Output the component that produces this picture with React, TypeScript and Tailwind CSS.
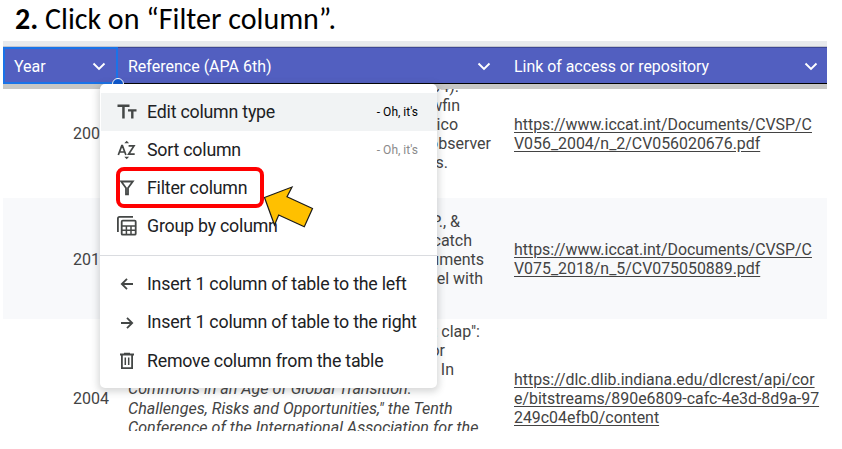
import type { ReactNode } from "react";

function Chevron() {
  return (
    <svg width="14" height="10" viewBox="0 0 14 10" fill="none" stroke="white" strokeWidth="1.9">
      <path d="M1.5 1.5 L7 7 L12.5 1.5" />
    </svg>
  );
}

function TypeIcon() {
  return (
    <svg width="20" height="18" viewBox="0 0 20 18" fill="#444746">
      <path d="M0.5 1.5h12v2.4H7.7V15.5H5.2V3.9H0.5z M11 6.2h8.5V8.5h-3v7h-2.4V8.5H11z" />
    </svg>
  );
}

function SortIcon() {
  return (
    <svg width="20" height="20" viewBox="0 0 20 20" fill="none" stroke="#444746" strokeWidth="1.7">
      <path d="M1.3 15 L4.8 5.7 H5.4 L8.9 15 M2.6 12 H7.6 M11.6 5.9 H17 L11.6 14.2 H17.7" />
      <path d="M7.3 3.2 L9.7 .8 L12.1 3.2z M7.3 16.8 L9.7 19.2 L12.1 16.8z" fill="#444746" stroke="none" />
    </svg>
  );
}

function FilterIcon() {
  return (
    <svg width="20" height="18" viewBox="0 0 20 18" fill="none" stroke="#444746" strokeWidth="1.8">
      <path d="M4.2 2.5H15.8L11 9V15.3H9V9z" />
    </svg>
  );
}

function GroupIcon() {
  return (
    <svg width="20" height="20" viewBox="0 0 20 20" fill="none" stroke="#444746" strokeWidth="1.8">
      <path d="M.9 16V2.5Q.9 .9 2.5 .9H16" />
      <rect x="4.7" y="4.7" width="14" height="14" rx="1" />
      <path d="M4.7 10H18.7M4.7 14.3H18.7M9.4 10V18.7M14 10V18.7" strokeWidth="1.5" />
    </svg>
  );
}

function ArrowIcon({ right = false }: { right?: boolean }) {
  return (
    <svg width="20" height="16" viewBox="0 0 20 16" fill="none" stroke="#444746" strokeWidth="1.8">
      {right ? <path d="M4 8H15M10 2.8L15.2 8L10 13.2" /> : <path d="M16 8H5M10 2.8L4.8 8L10 13.2" />}
    </svg>
  );
}

function TrashIcon() {
  return (
    <svg width="20" height="20" viewBox="0 0 20 20" fill="none" stroke="#444746" strokeWidth="1.8">
      <path d="M3 3.5H17M7 2.6H13M4.9 3.5V17.2H15.1V3.5" />
      <path d="M8.3 6.5V14M11.7 6.5V14" strokeWidth="1.5" />
    </svg>
  );
}

function MenuItem({ icon, label, hint, active = false }: { icon: ReactNode; label: string; hint?: string; active?: boolean }) {
  return (
    <div className={`ml-px flex h-[38.2px] items-center pl-4 pr-[19px] ${active ? "bg-[#f1f3f4]" : ""}`}>
      <span className="flex w-5 shrink-0 justify-center pb-px">{icon}</span>
      <span className="ml-[10px] whitespace-nowrap pb-[0.5px] text-[17.8px] tracking-[-0.22px] text-[#202124]">{label}</span>
      {hint && <span className={`ml-auto whitespace-nowrap pb-px text-[12px] ${active ? "text-black" : "text-[#8a8a8a]"}`}>{hint}</span>}
    </div>
  );
}

function Row({ year, lines, link, className }: { year: string; lines: ReactNode; link: string[]; className: string }) {
  return (
    <div className={`flex shrink-0 items-center leading-[19.1px] ${className}`}>
      <div className="w-[106px] shrink-0 text-right">{year}</div>
      <div className="ml-[19px] w-[386px] shrink-0 whitespace-nowrap">{lines}</div>
      <div className="whitespace-nowrap text-[15.9px] underline underline-offset-2">
        {link.map((l) => (
          <div key={l}>{l}</div>
        ))}
      </div>
    </div>
  );
}

export default function App() {
  return (
    <div className="relative h-[449px] w-[842px] overflow-hidden bg-white font-['Roboto',sans-serif]">
      <h1 className="flex h-[41px] items-center whitespace-nowrap pb-[5px] pl-[15px] font-['Carlito','Lato',sans-serif] text-[30px] text-black">
        <span><b>2.</b> Click on “Filter column”.</span>
      </h1>

      <div className="ml-[3px] w-[824px]">
        <div className="h-[6px] border-b border-[#c3c6ce] bg-[#e8eaed]" />
        <div className="flex h-[37px] border-b border-black bg-[#525fc0] text-[16px] text-white">
          <div className="-mb-px flex w-[115px] shrink-0 items-center justify-between border-2 border-[#1a73e8] pl-[9px] pr-[10px] pt-[2px]">
            <span>Year</span>
            <Chevron />
          </div>
          <div className="flex w-[386px] shrink-0 items-center justify-between border-t border-[#3d4795] pl-[10px] pr-[13px] pt-[2px]">
            <span>Reference (APA 6th)</span>
            <Chevron />
          </div>
          <div className="flex flex-1 items-center justify-between border-t border-[#3d4795] pl-[10px] pr-[9px] pt-[2px]">
            <span className="text-[15.9px]">Link of access or repository</span>
            <Chevron />
          </div>
        </div>
        <div className="h-[5px] bg-[#c7c7c5]" />

        <div className="flex h-[342px] flex-col overflow-hidden text-[16px] text-[#434343]">
          <Row
            className="-mt-5 h-[129px] pt-px"
            year="2004"
            link={["https://www.iccat.int/Documents/CVSP/C", "V056_2004/n_2/CV056020676.pdf"]}
            lines={
              <>
                <div className="w-[331px] text-right">(2004).</div>
                <div className="w-[332px] text-right">yellowfin</div>
                <div className="w-[330px] text-right">Mexico</div>
                <div className="w-[363px] text-right">observer</div>
                <div className="w-[320px] text-right">s.</div>
                <div>&nbsp;</div>
              </>
            }
          />
          <Row
            className="h-[121px] bg-[#f8f9fb] pt-[1.5px]"
            year="2018"
            link={["https://www.iccat.int/Documents/CVSP/C", "V075_2018/n_5/CV075050889.pdf"]}
            lines={
              <>
                <div className="w-[332px] text-right">P., &amp;</div>
                <div className="w-[344px] text-right">catch</div>
                <div className="w-[356px] text-right">Documents</div>
                <div className="w-[355px] text-right">model with</div>
                <div>&nbsp;</div>
              </>
            }
          />
          <Row
            className="h-[159px]"
            year="2004"
            link={["https://dlc.dlib.indiana.edu/dlcrest/api/cor", "e/bitstreams/890e6809-cafc-4e3d-8d9a-97", "249c04efb0/content"]}
            lines={
              <>
                <div className="w-[352px] text-right">t clap":</div>
                <div className="w-[317px] text-right">or</div>
                <div className="w-[326px] text-right">In</div>
                <div className="text-[16.08px] italic">Commons in an Age of Global Transition:</div>
                <div className="text-[16.08px] italic">Challenges, Risks and Opportunities," the Tenth</div>
                <div className="text-[16.08px] italic">Conference of the International Association for the</div>
                <div>&nbsp;</div>
                <div>&nbsp;</div>
              </>
            }
          />
        </div>
      </div>

      <div className="absolute left-[112px] top-[78px] size-3 rounded-full border border-white bg-[#0b57d0]" />

      <div className="absolute left-[100px] top-[84px] h-[304px] w-[337px] rounded-[5px] bg-white pt-[9px] shadow-[0_2px_7px_2px_rgba(60,64,67,0.2)]">
        <MenuItem icon={<TypeIcon />} label="Edit column type" hint="- Oh, it's" active />
        <MenuItem icon={<SortIcon />} label="Sort column" hint="- Oh, it's" />
        <MenuItem icon={<FilterIcon />} label="Filter column" />
        <MenuItem icon={<GroupIcon />} label="Group by column" />
        <div className="mb-[10px] mt-[9px] h-px bg-[#dadce0]" />
        <MenuItem icon={<ArrowIcon />} label="Insert 1 column of table to the left" />
        <MenuItem icon={<ArrowIcon right />} label="Insert 1 column of table to the right" />
        <MenuItem icon={<TrashIcon />} label="Remove column from the table" />
      </div>

      <div className="absolute left-[116px] top-[167px] h-[41px] w-[148px] rounded-lg border-4 border-[#ff0000]" />
      <svg className="absolute left-[260px] top-[182px]" width="58" height="50" viewBox="260 182 58 50">
        <path d="M264.5 197.5L292 187L287 196.8L312.5 208.5L304.3 226.8L278.7 215L274.5 225z" fill="#ffc000" stroke="#1a1a1a" strokeWidth="1.2" />
      </svg>
    </div>
  );
}
